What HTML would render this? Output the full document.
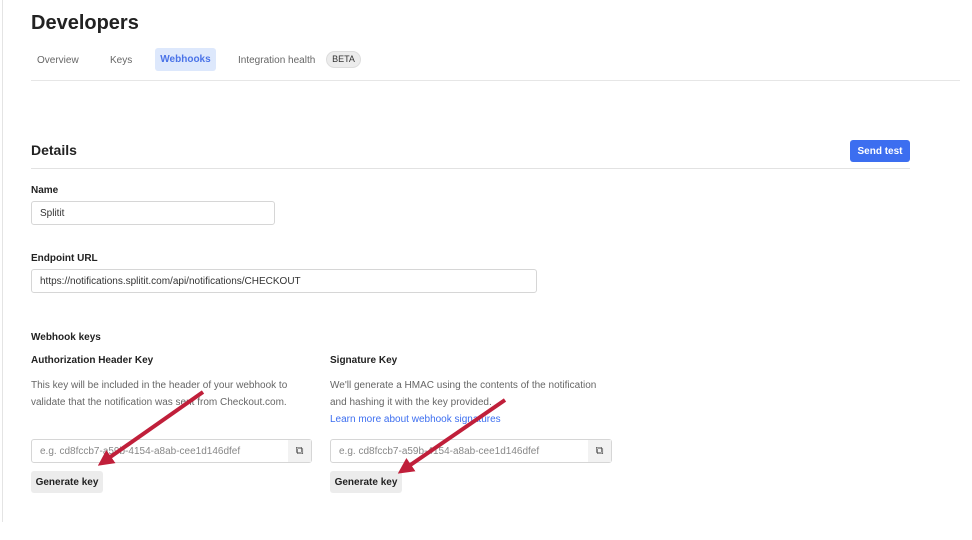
<!DOCTYPE html><html><head><style>
*{margin:0;padding:0;box-sizing:border-box}
body{width:972px;height:540px;background:#fff;font-family:"Liberation Sans",sans-serif;position:relative;overflow:hidden;color:#222}
.a{position:absolute;white-space:nowrap}
.inp{position:absolute;border:1px solid #d6d6d6;border-radius:3px;background:#fff;font-size:10px;color:#333;padding-left:8px;display:flex;align-items:center}
.btn{position:absolute;background:#ececec;border-radius:3px;font-size:10px;font-weight:bold;color:#222;display:flex;align-items:center;justify-content:center}
.lbl{font-size:10px;font-weight:bold;color:#222}
.desc{font-size:10px;color:#666;line-height:17px}
</style></head><body>
<div class="a" style="left:2px;top:0;width:1px;height:522px;background:#e4e4e4"></div>
<div class="a" style="left:31px;top:12px;font-size:20px;font-weight:bold;color:#222">Developers</div>
<div class="a" style="left:37px;top:55px;font-size:10px;color:#666">Overview</div>
<div class="a" style="left:110px;top:55px;font-size:10px;color:#666">Keys</div>
<div class="a" style="left:155px;top:48px;width:61px;height:23px;background:#dde8fc;border-radius:3px;font-size:10px;font-weight:bold;color:#4a73e8;text-align:center;line-height:23px">Webhooks</div>
<div class="a" style="left:238px;top:55px;font-size:10px;color:#666">Integration health</div>
<div class="a" style="left:326px;top:51px;width:35px;height:17px;background:#ececec;border:1px solid #ddd;border-radius:9px;font-size:9px;color:#333;text-align:center;line-height:15px">BETA</div>
<div class="a" style="left:31px;top:80px;width:929px;height:1px;background:#e6e6e6"></div>
<div class="a" style="left:31px;top:142px;font-size:14px;font-weight:bold;color:#222">Details</div>
<div class="a" style="left:850px;top:140px;width:60px;height:22px;background:#3c6ef0;border-radius:3px;color:#fff;font-size:10px;font-weight:bold;text-align:center;line-height:23px">Send test</div>
<div class="a" style="left:31px;top:168px;width:879px;height:1px;background:#e2e2e2"></div>
<div class="a lbl" style="left:31px;top:185px">Name</div>
<div class="inp" style="left:31px;top:201px;width:244px;height:24px">Splitit</div>
<div class="a lbl" style="left:31px;top:253px">Endpoint URL</div>
<div class="inp" style="left:31px;top:269px;width:506px;height:24px">https://notifications.splitit.com/api/notifications/CHECKOUT</div>
<div class="a lbl" style="left:31px;top:332px">Webhook keys</div>
<div class="a lbl" style="left:31px;top:355px">Authorization Header Key</div>
<div class="a lbl" style="left:330px;top:355px">Signature Key</div>
<div class="a desc" style="left:31px;top:377px">This key will be included in the header of your webhook to<br>validate that the notification was sent from Checkout.com.</div>
<div class="a desc" style="left:330px;top:377px">We'll generate a HMAC using the contents of the notification<br>and hashing it with the key provided.<br><span style="color:#3c6ef0">Learn more about webhook signatures</span></div>
<div class="inp" style="left:31px;top:439px;width:281px;height:24px;color:#888">e.g. cd8fccb7-a59b-4154-a8ab-cee1d146dfef</div>
<div class="a" style="left:288px;top:440px;width:23px;height:22px;background:#f2f2f2;font-size:11px;text-align:center;line-height:22px;color:#444">⧉</div>
<div class="inp" style="left:330px;top:439px;width:282px;height:24px;color:#888">e.g. cd8fccb7-a59b-4154-a8ab-cee1d146dfef</div>
<div class="a" style="left:588px;top:440px;width:23px;height:22px;background:#f2f2f2;font-size:11px;text-align:center;line-height:22px;color:#444">⧉</div>
<div class="btn" style="left:31px;top:471px;width:72px;height:22px">Generate key</div>
<div class="btn" style="left:330px;top:471px;width:72px;height:22px">Generate key</div>
<svg class="a" style="left:0;top:0" width="972" height="540">
<defs><marker id="m" markerWidth="4" markerHeight="4" refX="1.5" refY="2" orient="auto"><path d="M0,0L4,2L0,4z" fill="#c01f3a"/></marker></defs>
<line x1="203" y1="392" x2="106" y2="460" stroke="#c01f3a" stroke-width="4" marker-end="url(#m)"/>
<line x1="505" y1="400" x2="406" y2="468" stroke="#c01f3a" stroke-width="4" marker-end="url(#m)"/>
</svg>
</body></html>
